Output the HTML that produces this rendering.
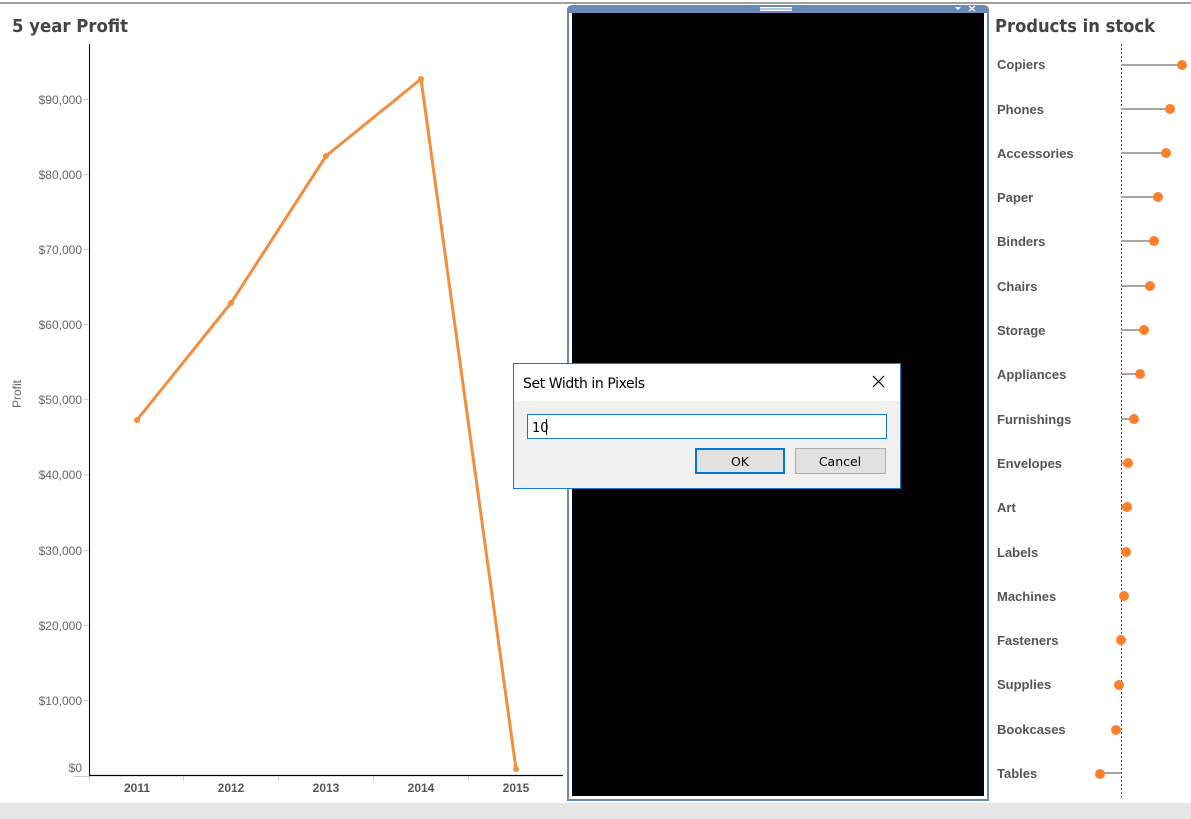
<!DOCTYPE html>
<html><head><meta charset="utf-8"><style>
html,body{margin:0;padding:0;width:1191px;height:819px;overflow:hidden;background:#fff;font-family:"Liberation Sans",Arial,sans-serif}
</style></head><body>
<svg width="1191" height="819" xmlns="http://www.w3.org/2000/svg" style="position:absolute;left:0;top:0;font-family:'Liberation Sans',Arial,sans-serif">
<rect x="0" y="0" width="1191" height="819" fill="#fff"/>
<rect x="0" y="2" width="1191" height="2" fill="#a0a0a0"/>
<rect x="0" y="803" width="1191" height="16" fill="#e6e6e6"/>
<!-- left chart -->
<text x="12" y="32" font-size="18" font-weight="bold" fill="#444" font-family="DejaVu Sans,sans-serif" textLength="116" lengthAdjust="spacingAndGlyphs">5 year Profit</text>
<line x1="89.5" y1="44" x2="89.5" y2="776" stroke="#000" stroke-width="1"/>
<line x1="89" y1="775.5" x2="563" y2="775.5" stroke="#000" stroke-width="1.2"/>
<g font-size="12" fill="#666" text-anchor="end">
<text x="82" y="104">$90,000</text>
<text x="82" y="179">$80,000</text>
<text x="82" y="254">$70,000</text>
<text x="82" y="329">$60,000</text>
<text x="82" y="404">$50,000</text>
<text x="82" y="479">$40,000</text>
<text x="82" y="555">$30,000</text>
<text x="82" y="630">$20,000</text>
<text x="82" y="705">$10,000</text>
<text x="82" y="772">$0</text>
</g>
<g stroke="#ccc">
<line x1="84" y1="99.5" x2="89" y2="99.5"/><line x1="84" y1="174.5" x2="89" y2="174.5"/><line x1="84" y1="249.5" x2="89" y2="249.5"/><line x1="84" y1="324.5" x2="89" y2="324.5"/><line x1="84" y1="399.5" x2="89" y2="399.5"/><line x1="84" y1="474.5" x2="89" y2="474.5"/><line x1="84" y1="550.5" x2="89" y2="550.5"/><line x1="84" y1="625.5" x2="89" y2="625.5"/><line x1="84" y1="700.5" x2="89" y2="700.5"/><line x1="74" y1="776.5" x2="89" y2="776.5"/>
<line x1="183.5" y1="776" x2="183.5" y2="781"/><line x1="278.5" y1="776" x2="278.5" y2="781"/><line x1="373.5" y1="776" x2="373.5" y2="781"/><line x1="468.5" y1="776" x2="468.5" y2="781"/><line x1="89.5" y1="776" x2="89.5" y2="781"/>
</g>
<text transform="translate(21,408) rotate(-90)" font-size="12" fill="#666">Profit</text>
<g font-size="12" font-weight="bold" fill="#555" text-anchor="middle">
<text x="137" y="792">2011</text><text x="231" y="792">2012</text><text x="326" y="792">2013</text><text x="421" y="792">2014</text><text x="516" y="792">2015</text>
</g>
<polyline points="137,420 231,303 326,156 421,79 516,769" fill="none" stroke="#f28e3f" stroke-width="3" stroke-linejoin="round"/>
<g fill="#f28e3f"><circle cx="137" cy="420" r="3"/><circle cx="231" cy="303" r="3"/><circle cx="326" cy="156" r="3"/><circle cx="421" cy="79" r="3"/><circle cx="516" cy="769" r="3"/></g>
<!-- black panel -->
<path d="M567,801 L567,10 Q567,5 573,5 L983,5 Q989,5 989,10 L989,801 Z" fill="#6a8ab5"/>
<rect x="569" y="13" width="418" height="786" fill="#fff"/>
<rect x="572" y="13" width="412" height="783" fill="#000"/>
<g fill="#fff"><rect x="760" y="7" width="32" height="1.5"/><rect x="760" y="9.5" width="32" height="1.5"/></g>
<path d="M955,7 L961,7 L958,10 Z" fill="#fff"/>
<path d="M969,6 L975,11 M975,6 L969,11" stroke="#fff" stroke-width="1.3"/>
<!-- dialog -->
<rect x="513.5" y="363.5" width="387" height="125" fill="#f0f0f0" stroke="#1979ca"/>
<rect x="514" y="364" width="386" height="37" fill="#fff"/>
<text x="523" y="388" font-size="14" fill="#000" font-family="DejaVu Sans,sans-serif" textLength="122">Set Width in Pixels</text>
<path d="M873,376 L884,387 M884,376 L873,387" stroke="#000" stroke-width="1.2"/>
<rect x="527.5" y="414.5" width="359" height="24" fill="#fff" stroke="#1979ca"/>
<text x="532" y="432" font-size="13" fill="#000" font-family="DejaVu Sans,sans-serif">10</text>
<line x1="546.5" y1="419" x2="546.5" y2="435" stroke="#000"/>
<rect x="696" y="449" width="88" height="24" fill="#e1e1e1" stroke="#0078d7" stroke-width="2"/>
<text x="740" y="466" font-size="12.5" fill="#000" text-anchor="middle" font-family="DejaVu Sans,sans-serif">OK</text>
<rect x="795.5" y="448.5" width="90" height="25" fill="#e1e1e1" stroke="#adadad"/>
<text x="840" y="466" font-size="12.5" fill="#000" text-anchor="middle" font-family="DejaVu Sans,sans-serif">Cancel</text>
<!-- right chart -->
<text x="995" y="32" font-size="18" font-weight="bold" fill="#444" font-family="DejaVu Sans,sans-serif" textLength="160" lengthAdjust="spacingAndGlyphs">Products in stock</text>
<line x1="1121.5" y1="44" x2="1121.5" y2="797" stroke="#555" stroke-dasharray="2,2"/>
<g font-size="13" font-weight="bold" fill="#555">
<text x="997" y="69">Copiers</text><text x="997" y="114">Phones</text><text x="997" y="158">Accessories</text><text x="997" y="202">Paper</text><text x="997" y="246">Binders</text><text x="997" y="291">Chairs</text><text x="997" y="335">Storage</text><text x="997" y="379">Appliances</text><text x="997" y="424">Furnishings</text><text x="997" y="468">Envelopes</text><text x="997" y="512">Art</text><text x="997" y="557">Labels</text><text x="997" y="601">Machines</text><text x="997" y="645">Fasteners</text><text x="997" y="689">Supplies</text><text x="997" y="734">Bookcases</text><text x="997" y="778">Tables</text>
</g>
<g stroke="#a6a6a6" stroke-width="2">
<line x1="1121" y1="65" x2="1182" y2="65"/><line x1="1121" y1="109" x2="1170" y2="109"/><line x1="1121" y1="153" x2="1166" y2="153"/><line x1="1121" y1="197" x2="1158" y2="197"/><line x1="1121" y1="241" x2="1154" y2="241"/><line x1="1121" y1="286" x2="1150" y2="286"/><line x1="1121" y1="330" x2="1144" y2="330"/><line x1="1121" y1="374" x2="1140" y2="374"/><line x1="1121" y1="419" x2="1134" y2="419"/><line x1="1121" y1="463" x2="1128" y2="463"/><line x1="1121" y1="507" x2="1127" y2="507"/><line x1="1121" y1="552" x2="1126" y2="552"/><line x1="1100" y1="773" x2="1121" y2="773"/>
</g>
<g fill="#ff7f2a">
<circle cx="1182" cy="65" r="5"/><circle cx="1170" cy="109" r="5"/><circle cx="1166" cy="153" r="5"/><circle cx="1158" cy="197" r="5"/><circle cx="1154" cy="241" r="5"/><circle cx="1150" cy="286" r="5"/><circle cx="1144" cy="330" r="5"/><circle cx="1140" cy="374" r="5"/><circle cx="1134" cy="419" r="5"/><circle cx="1128" cy="463" r="5"/><circle cx="1127" cy="507" r="5"/><circle cx="1126" cy="552" r="5"/><circle cx="1124" cy="596" r="5"/><circle cx="1121" cy="640" r="5"/><circle cx="1119" cy="685" r="5"/><circle cx="1116" cy="730" r="5"/><circle cx="1100" cy="774" r="5"/>
</g>
</svg>
</body></html>
